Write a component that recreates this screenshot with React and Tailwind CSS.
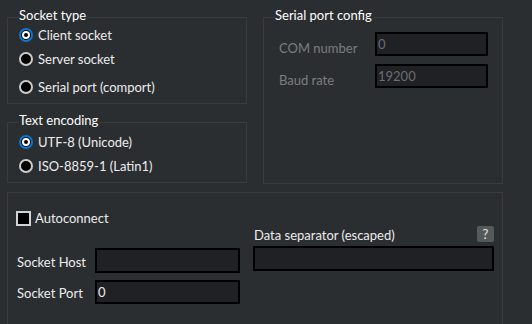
import React from 'react';

const font = { fontFamily: 'Lato, "Liberation Sans", sans-serif' };

function Radio({ checked, label }) {
  return (
    <div className="flex items-center h-[18px]">
      {checked ? (
        <div className="w-[14px] h-[14px] rounded-full border-2 border-[#0a78d4] bg-black flex items-center justify-center">
          <div className="w-[8px] h-[8px] rounded-full border-2 border-white bg-black" />
        </div>
      ) : (
        <div className="w-[14px] h-[14px] rounded-full border-2 border-[#cbcbcb] bg-black" />
      )}
      <span className="ml-[5px] text-[13px] text-[#ececec] leading-none">{label}</span>
    </div>
  );
}

function Group({ title, className, children }) {
  return (
    <div className={`relative border border-[#3a3b3e] ${className}`}>
      {title && (
        <span className="absolute left-[11px] -top-[9px] text-[13px] leading-none text-white bg-[#2b2e31] pr-[1px]">
          {title}
        </span>
      )}
      {children}
    </div>
  );
}

function Field({ value, disabled, className }) {
  return (
    <div className={`border-2 border-black bg-[#1f2125] flex items-start pl-[1px] pt-[4px] ${className}`}>
      <span className={`text-[13px] leading-none ${disabled ? 'text-[#6c6e71]' : 'text-[#ececec]'}`}>{value}</span>
    </div>
  );
}

export default function App() {
  return (
    <div className="w-[532px] h-[324px] overflow-hidden bg-[#2b2e31] pt-[17px] pl-[7px]" style={font}>
      <div className="flex gap-[16px]">
        <div className="flex flex-col w-[240px]">
          <Group title="Socket type" className="h-[87px] pt-[8px] pl-[11px]">
            <Radio checked label="Client socket" />
            <div className="mt-[6px]"><Radio label="Server socket" /></div>
            <div className="mt-[10px]"><Radio label="Serial port (comport)" /></div>
          </Group>
          <Group title="Text encoding" className="mt-[18px] h-[61px] pt-[10px] pl-[11px]">
            <Radio checked label="UTF-8 (Unicode)" />
            <div className="mt-[6px]"><Radio label="ISO-8859-1 (Latin1)" /></div>
          </Group>
        </div>
        <Group title="Serial port config" className="w-[240px] h-[167px] pt-[14px] pl-[15px]">
          <div className="flex items-center">
            <span className="w-[96px] mt-[8px] text-[13px] leading-none text-[#7b7d80]">COM number</span>
            <Field value="0" disabled className="w-[113px] h-[24px]" />
          </div>
          <div className="flex items-center mt-[8px]">
            <span className="w-[96px] mt-[8px] text-[13px] leading-none text-[#7b7d80]">Baud rate</span>
            <Field value="19200" disabled className="w-[113px] h-[24px]" />
          </div>
        </Group>
      </div>

      <div className="mt-[8px] w-[496px] h-[200px] border border-[#3a3b3e] pt-[18px] pl-[8px]">
        <div className="flex items-center">
          <div className="w-[15px] h-[15px] border-2 border-[#d2d2d2] bg-black" />
          <span className="ml-[4px] text-[13px] leading-none text-[#ececec]">Autoconnect</span>
        </div>
        <div className="flex pl-[1px]">
          <div className="flex flex-col pt-[22px]">
            <div className="flex items-center">
              <span className="w-[78px] mt-[3px] text-[13px] leading-none text-[#ececec]">Socket Host</span>
              <Field value="" className="w-[145px] h-[25px]" />
            </div>
            <div className="flex items-center mt-[7px]">
              <span className="w-[78px] mt-[2px] text-[13px] leading-none text-[#ececec]">Socket Port</span>
              <Field value="0" className="w-[145px] h-[24px]" />
            </div>
          </div>
          <div className="flex flex-col ml-[13px] w-[241px]">
            <div className="flex items-center justify-between h-[16px]">
              <span className="ml-[1px] mt-[2px] text-[13px] leading-none text-[#ececec]">Data separator (escaped)</span>
              <div className="w-[17px] h-[16px] rounded-[2px] bg-[#56595c] flex items-center justify-center text-[13px] leading-none text-[#e6e6e6]">?</div>
            </div>
            <Field value="" className="mt-[4px] w-[241px] h-[25px]" />
          </div>
        </div>
      </div>
    </div>
  );
}
